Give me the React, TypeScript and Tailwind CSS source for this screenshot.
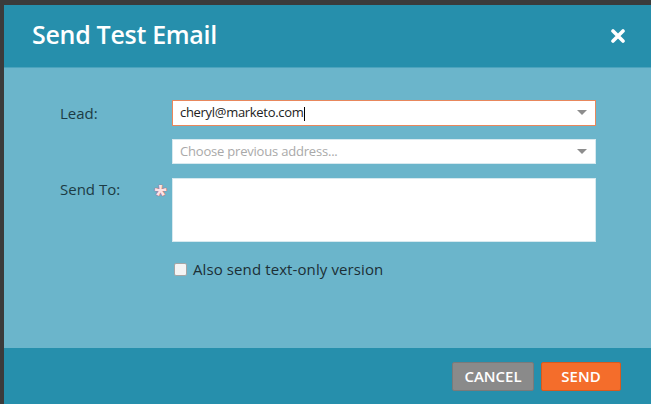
import React from "react";

const Caret = () => (
    <svg width="10" height="6" viewBox="0 0 10 6" className="text-[#8d8d8d]">
        <path d="M0 0h10L5 5z" fill="currentColor" />
    </svg>
);

export default function App() {
    return (
        <div className="w-[651px] h-[404px] bg-[#3b3b3b] pt-[5px] pl-[4px] font-['Open_Sans',sans-serif]">
            <div className="flex flex-col h-full bg-[#6bb5cb]">
                <div className="h-[63px] bg-[#268fac] flex items-center justify-between pl-[28px] pr-[26px] border-b border-[#4ba3bd]">
                    <h1 className="text-white text-[25px] font-semibold tracking-[-0.3px] pb-[2px]">Send Test Email</h1>
                    <svg width="14" height="14" viewBox="0 0 14 14">
                        <path d="M2 2l10 10M12 2L2 12" stroke="white" strokeWidth="3.6" strokeLinecap="round" />
                    </svg>
                </div>

                <div className="flex-1 pt-[32px] pl-[56px]">
                    <div className="flex items-center">
                        <span className="w-[112px] text-[15px] text-[#1c3b44]">Lead:</span>
                        <div className="w-[424px] h-[26px] bg-white border border-[#e8875c] flex items-center justify-between pl-[7px] pr-[8px]">
                            <span className="text-[13px] text-[#222] tracking-[-0.3px]">
                                cheryl@marketo.com<span className="inline-block w-px h-[14px] bg-black align-middle" />
                            </span>
                            <Caret />
                        </div>
                    </div>

                    <div className="flex mt-[13px] pl-[112px]">
                        <div className="w-[424px] h-[25px] bg-white border border-[#d7e9ef] flex items-center justify-between pl-[7px] pr-[8px]">
                            <span className="text-[13px] text-[#a9a9a9] tracking-[-0.2px]">Choose previous address...</span>
                            <Caret />
                        </div>
                    </div>

                    <div className="flex mt-[14px]">
                        <span className="w-[96px] text-[15px] text-[#1c3b44]">Send To:</span>
                        <span className="w-[16px] text-[24px] leading-none font-bold text-[#fbe3e6] pt-[4px] -ml-[2px] [text-shadow:0_0_1px_#c8495a,0_0_1px_#c8495a]">*</span>
                        <div className="w-[424px] h-[64px] bg-white border border-[#d7e9ef] ml-[2px]" />
                    </div>

                    <label className="flex items-center gap-[6px] mt-[16px] ml-[114px]">
                        <span className="w-[13px] h-[13px] bg-[#f4f4f4] border border-[#a5a5a5] rounded-[2px]" />
                        <span className="text-[15px] text-[#1c2f36] tracking-[0.1px]">Also send text-only version</span>
                    </label>
                </div>

                <div className="h-[56px] bg-[#268fac] flex items-center justify-end gap-[7px] pr-[30px]">
                    <button className="w-[82px] h-[29px] bg-[#8a8a8a] border border-[#7a7a7a] text-white text-[15px] font-semibold rounded-[2px]">
                        CANCEL
                    </button>
                    <button className="w-[80px] h-[29px] bg-[#f46d2b] border border-[#d85a1e] text-white text-[15px] font-semibold rounded-[2px]">
                        SEND
                    </button>
                </div>
            </div>
        </div>
    );
}
